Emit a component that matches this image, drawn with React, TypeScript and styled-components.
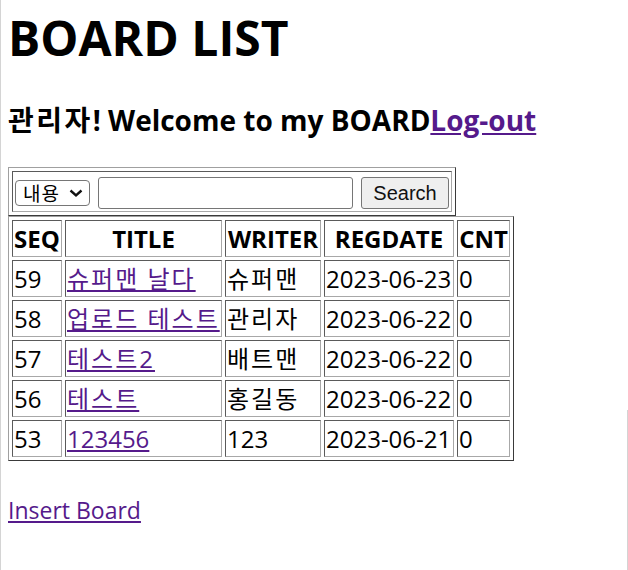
import React from "react";
import styled, { createGlobalStyle } from "styled-components";

const GlobalStyle = createGlobalStyle`
  html, body { margin: 0; padding: 0; background: #ffffff; }
  body {
    font-family: "Open Sans", "Noto Sans CJK KR", sans-serif;
    color: #000000;
  }
  body::before {
    content: "";
    position: fixed;
    left: 0; top: 0; bottom: 0;
    width: 1px;
    background: #d4d4d4;
  }
  body::after {
    content: "";
    position: fixed;
    left: 627px; top: 410px; bottom: 0;
    width: 1px;
    background: #d4d4d4;
  }
`;

const Page = styled.div`
  padding: 0 8px;
`;

const Title = styled.h1`
  margin: 8px 0 0;
  font-family: "Open Sans", "Noto Sans CJK KR", sans-serif;
  font-weight: 700;
  font-size: 48px;
  line-height: 60px;
`;

const Welcome = styled.h2`
  margin: 33px 0 0;
  font-family: "Open Sans", "Noto Sans CJK KR", sans-serif;
  font-weight: 700;
  font-size: 28px;
  line-height: 38px;
  white-space: nowrap;
`;

const Ko = styled.span<{ $gap?: number }>`
  letter-spacing: ${(p) => p.$gap ?? 2}px;
`;

const Link = styled.a`
  color: #551a8b;
  text-decoration: underline;
  cursor: pointer;
`;

const FrameTable = styled.table<{ $width?: number }>`
  border-collapse: separate;
  border-spacing: 3px;
  border: 1px solid;
  border-color: #a0a0a0 #3a3a3a #3a3a3a #a0a0a0;
  ${(p) => (p.$width ? `width: ${p.$width}px; table-layout: fixed;` : "")}
`;

const SearchTable = styled(FrameTable)`
  margin-top: 28px;
`;

const FrameCell = styled.td`
  border: 1px solid;
  border-color: #5a5a5a #a8a8a8 #a8a8a8 #5a5a5a;
  padding: 5px 2px 2px;
`;

const SearchRow = styled.div`
  display: flex;
  align-items: center;
  gap: 8px;
`;

const SelectWrap = styled.div`
  position: relative;
  display: inline-flex;
`;

const Select = styled.select`
  appearance: none;
  -webkit-appearance: none;
  box-sizing: border-box;
  width: 75px;
  height: 26px;
  border: 1px solid #767676;
  border-radius: 4px;
  background: #ffffff;
  padding: 0 0 0 7px;
  margin: 0;
  font-family: "Noto Sans CJK KR", sans-serif;
  font-size: 19px;
  letter-spacing: 1px;
  line-height: 24px;
  color: #000000;
`;

const Chevron = styled.svg`
  position: absolute;
  right: 7px;
  top: 9px;
  width: 14px;
  height: 8px;
  pointer-events: none;
`;

const TextInput = styled.input`
  box-sizing: border-box;
  width: 255px;
  height: 32px;
  margin: 0;
  border: 1px solid #767676;
  border-radius: 3px;
  padding: 0 4px;
  font-size: 18px;
  background: #ffffff;
`;

const Button = styled.button`
  box-sizing: border-box;
  width: 88px;
  height: 32px;
  margin: 0;
  padding: 0;
  border: 1px solid #767676;
  border-radius: 3px;
  background: #efefef;
  font-family: "Liberation Sans", Arial, sans-serif;
  font-size: 20px;
  color: #111111;
`;

const HeadCell = styled.th<{ $w: number }>`
  box-sizing: border-box;
  width: ${(p) => p.$w}px;
  border: 1px solid;
  border-color: #5a5a5a #a8a8a8 #a8a8a8 #5a5a5a;
  padding: 1px;
  font-weight: 700;
  font-size: 24px;
  line-height: 33px;
  text-align: center;
  white-space: nowrap;
  overflow: hidden;
`;

const BodyCell = styled.td`
  border: 1px solid;
  border-color: #5a5a5a #a8a8a8 #a8a8a8 #5a5a5a;
  padding: 1px;
  font-size: 24px;
  line-height: 33px;
  text-align: left;
  white-space: nowrap;
  overflow: hidden;
`;

const Footer = styled.div`
  margin-top: 33px;
  font-size: 23px;
  line-height: 33px;
`;

const columns = [
  { key: "SEQ", w: 50 },
  { key: "TITLE", w: 157 },
  { key: "WRITER", w: 96 },
  { key: "REGDATE", w: 130 },
  { key: "CNT", w: 53 },
];

const rows = [
  { seq: 59, title: "슈퍼맨 날다", writer: "슈퍼맨", date: "2023-06-23", cnt: 0 },
  { seq: 58, title: "업로드 테스트", writer: "관리자", date: "2023-06-22", cnt: 0 },
  { seq: 57, title: "테스트2", writer: "배트맨", date: "2023-06-22", cnt: 0 },
  { seq: 56, title: "테스트", writer: "홍길동", date: "2023-06-22", cnt: 0 },
  { seq: 53, title: "123456", writer: "123", date: "2023-06-21", cnt: 0 },
];

const hasHangul = (s: string) => /[\uac00-\ud7a3]/.test(s);

const Text = ({ value }: { value: string }) =>
  hasHangul(value) ? <Ko>{value}</Ko> : <>{value}</>;

export default function App() {
  return (
    <>
      <GlobalStyle />
      <Page>
        <Title>BOARD LIST</Title>
        <Welcome>
          <Ko $gap={2.5}>관리자</Ko>! Welcome to my BOARD<Link href="#">Log-out</Link>
        </Welcome>
        <SearchTable>
          <tbody>
            <tr>
              <FrameCell>
                <SearchRow>
                  <SelectWrap>
                    <Select defaultValue="content">
                      <option value="content">내용</option>
                      <option value="title">제목</option>
                    </Select>
                    <Chevron viewBox="0 0 14 8">
                      <path
                        d="M1.5 1.5 L7 6.3 L12.5 1.5"
                        fill="none"
                        stroke="#111"
                        strokeWidth="2.4"
                      />
                    </Chevron>
                  </SelectWrap>
                  <TextInput type="text" />
                  <Button type="button">Search</Button>
                </SearchRow>
              </FrameCell>
            </tr>
          </tbody>
        </SearchTable>
        <FrameTable $width={506}>
          <tbody>
            <tr>
              {columns.map((c) => (
                <HeadCell key={c.key} $w={c.w}>
                  {c.key}
                </HeadCell>
              ))}
            </tr>
            {rows.map((r) => (
              <tr key={r.seq}>
                <BodyCell>{r.seq}</BodyCell>
                <BodyCell>
                  <Link href="#">
                    <Text value={r.title} />
                  </Link>
                </BodyCell>
                <BodyCell>
                  <Text value={r.writer} />
                </BodyCell>
                <BodyCell>{r.date}</BodyCell>
                <BodyCell>{r.cnt}</BodyCell>
              </tr>
            ))}
          </tbody>
        </FrameTable>
        <Footer>
          <Link href="#">Insert Board</Link>
        </Footer>
      </Page>
    </>
  );
}
